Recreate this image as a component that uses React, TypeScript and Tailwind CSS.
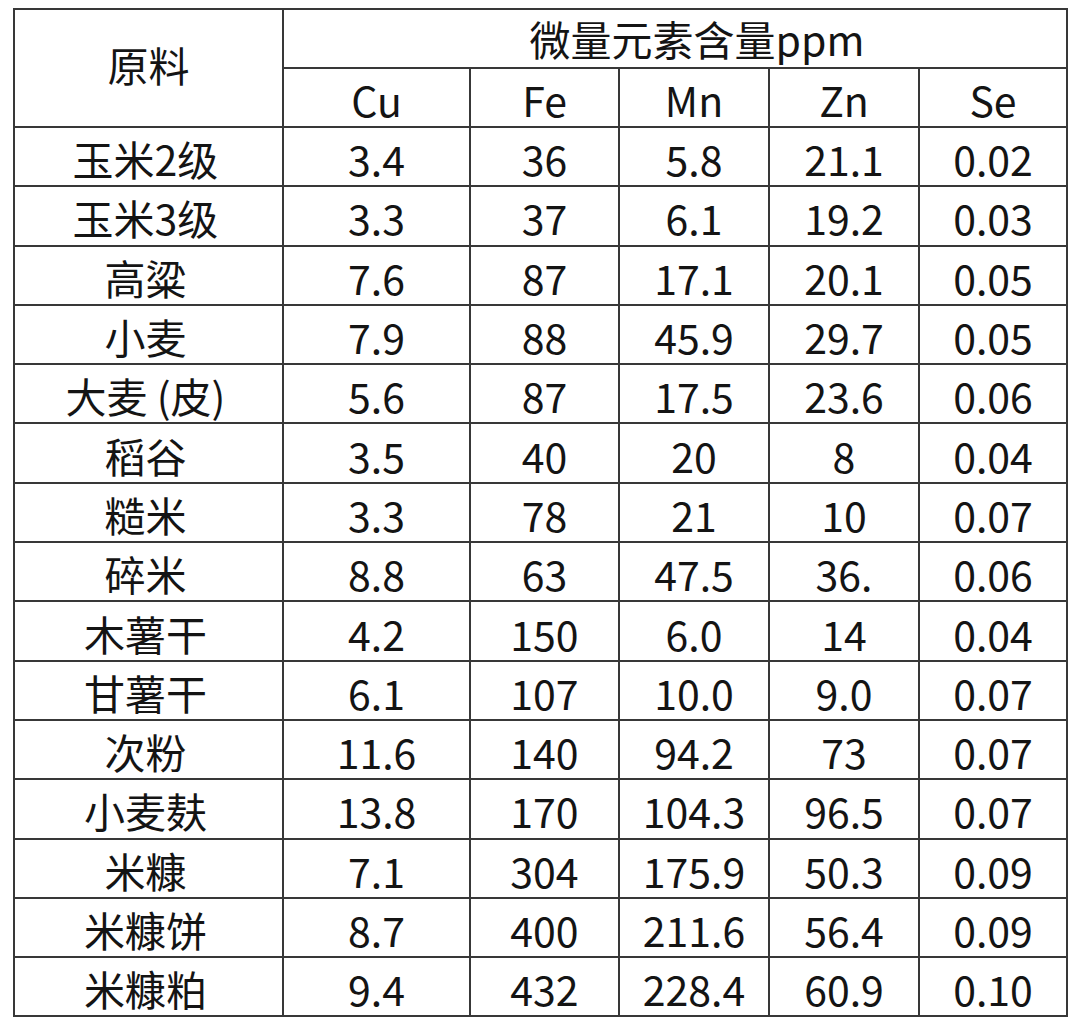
const rows: [string, string, string, string, string, string][] = [
  ['玉米2级', '3.4', '36', '5.8', '21.1', '0.02'],
  ['玉米3级', '3.3', '37', '6.1', '19.2', '0.03'],
  ['高粱', '7.6', '87', '17.1', '20.1', '0.05'],
  ['小麦', '7.9', '88', '45.9', '29.7', '0.05'],
  ['大麦 (皮)', '5.6', '87', '17.5', '23.6', '0.06'],
  ['稻谷', '3.5', '40', '20', '8', '0.04'],
  ['糙米', '3.3', '78', '21', '10', '0.07'],
  ['碎米', '8.8', '63', '47.5', '36.', '0.06'],
  ['木薯干', '4.2', '150', '6.0', '14', '0.04'],
  ['甘薯干', '6.1', '107', '10.0', '9.0', '0.07'],
  ['次粉', '11.6', '140', '94.2', '73', '0.07'],
  ['小麦麸', '13.8', '170', '104.3', '96.5', '0.07'],
  ['米糠', '7.1', '304', '175.9', '50.3', '0.09'],
  ['米糠饼', '8.7', '400', '211.6', '56.4', '0.09'],
  ['米糠粕', '9.4', '432', '228.4', '60.9', '0.10'],
];

const cell = 'border-2 border-[#383838] p-0 text-center align-middle leading-none';

export default function App() {
  return (
    <div
      className="min-h-screen bg-white pt-[8px] pl-[13px] text-[#141414]"
      style={{ fontFamily: '"Noto Sans CJK SC", "Noto Sans", sans-serif' }}
    >
      <table className="table-fixed border-collapse text-[41px]">
        <colgroup>
          <col className="w-[269px]" />
          <col className="w-[187px]" />
          <col className="w-[149px]" />
          <col className="w-[150px]" />
          <col className="w-[150px]" />
          <col className="w-[148px]" />
        </colgroup>
        <thead>
          <tr className="h-[59px]">
            <th rowSpan={2} className={`${cell} font-normal pb-[8px]`}>
              原料
            </th>
            <th colSpan={5} className={`${cell} font-normal pl-[44px]`}>
              微量元素含量ppm
            </th>
          </tr>
          <tr className="h-[59px]">
            {['Cu', 'Fe', 'Mn', 'Zn', 'Se'].map((h) => (
              <th key={h} className={`${cell} font-normal pt-[4px]`}>
                {h}
              </th>
            ))}
          </tr>
        </thead>
        <tbody>
          {rows.map((r) => (
            <tr key={r[0]} className="h-[59.3px]">
              {r.map((v, i) => (
                <td key={i} className={`${cell} pt-[4px] ${i === 0 ? 'pr-[6px]' : ''}`}>
                  {v}
                </td>
              ))}
            </tr>
          ))}
        </tbody>
      </table>
    </div>
  );
}
